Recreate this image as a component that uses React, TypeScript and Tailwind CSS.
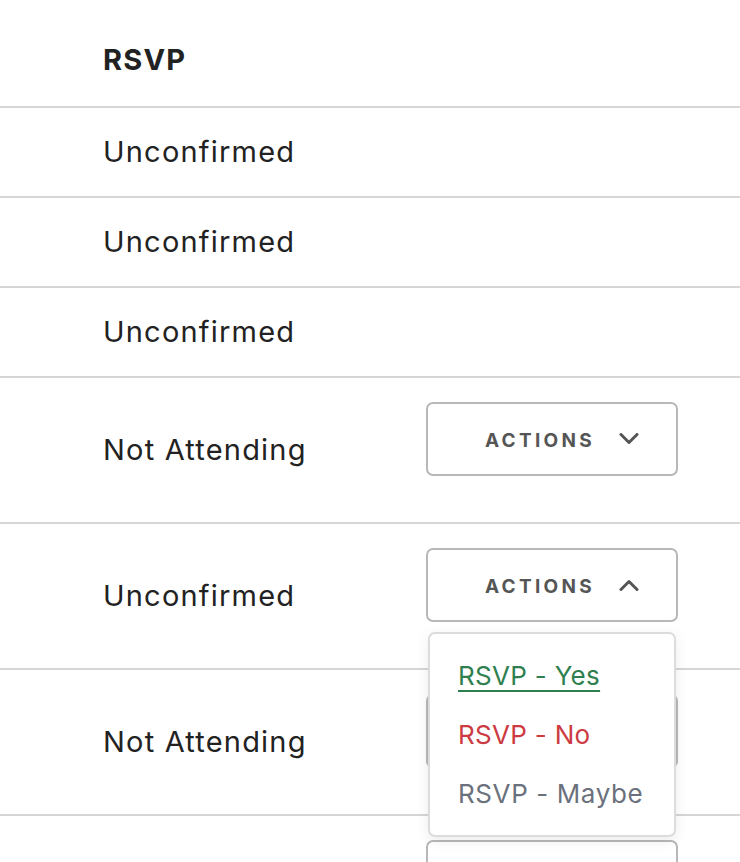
import { useState } from "react";

type Row = { status: string; actions?: boolean };

const rows: Row[] = [
    { status: "Unconfirmed" },
    { status: "Unconfirmed" },
    { status: "Unconfirmed" },
    { status: "Not Attending", actions: true },
    { status: "Unconfirmed", actions: true },
    { status: "Not Attending", actions: true },
    { status: "Unconfirmed", actions: true },
];

function Chevron({ up }: { up?: boolean }) {
    return (
        <svg width="20" height="12" viewBox="0 0 20 12" fill="none" className="shrink-0">
            <polyline
                points={up ? "2,10.5 10,2.5 18,10.5" : "2,1.5 10,9.5 18,1.5"}
                stroke="#555555"
                strokeWidth="3"
                strokeLinecap="round"
                strokeLinejoin="round"
            />
        </svg>
    );
}

function ActionsMenu({ open, onToggle }: { open: boolean; onToggle: () => void }) {
    return (
        <div className="relative mt-[24px]">
            <button
                onClick={onToggle}
                className="w-[252px] h-[74px] flex items-center justify-end gap-[24px] pr-[37px] bg-white border-2 border-[#b8b8b8] rounded-[7px]"
            >
                <span className="text-[19px] font-bold tracking-[3.3px] text-[#555555] mt-[4px]">ACTIONS</span>
                <Chevron up={open} />
            </button>

            {open && (
                <div className="absolute z-10 left-[2px] top-[84px] w-[248px] py-[12px] bg-white border-2 border-[#dcdcdc] rounded-[7px] shadow-[0_4px_14px_rgba(0,0,0,0.08)]">
                    <div className="h-[59px] flex items-center pl-[28px]">
                        <a className="text-[26px] tracking-[0.3px] text-[#2f8050] underline underline-offset-[5px] decoration-2">RSVP - Yes</a>
                    </div>
                    <div className="h-[59px] flex items-center pl-[28px]">
                        <a className="text-[26px] tracking-[0.3px] text-[#cc3a42]">RSVP - No</a>
                    </div>
                    <div className="h-[59px] flex items-center pl-[28px]">
                        <a className="text-[26px] tracking-[0.6px] text-[#6b717c]">RSVP - Maybe</a>
                    </div>
                </div>
            )}
        </div>
    );
}

export default function App() {
    const [openRow, setOpenRow] = useState<number | null>(4);

    return (
        <div className="w-[740px] h-[862px] overflow-hidden bg-white text-[#222222] font-['Inter',sans-serif]">
            <div className="h-[108px] flex items-center pl-[103px] pt-[14px] border-b-2 border-[#d6d6d6]">
                <span className="text-[29px] font-bold tracking-[1.2px]">RSVP</span>
            </div>

            {rows.map((row, i) => (
                <div
                    key={i}
                    className={`flex border-b-2 border-[#d6d6d6] ${row.actions ? "h-[146px]" : "h-[90px]"}`}
                >
                    <div className="w-[426px] shrink-0 pl-[103px] flex items-center">
                        <span className="text-[29px] tracking-[1.2px]">{row.status}</span>
                    </div>
                    {row.actions && (
                        <div className="flex items-start">
                            <ActionsMenu
                                open={openRow === i}
                                onToggle={() => setOpenRow(openRow === i ? null : i)}
                            />
                        </div>
                    )}
                </div>
            ))}
        </div>
    );
}
